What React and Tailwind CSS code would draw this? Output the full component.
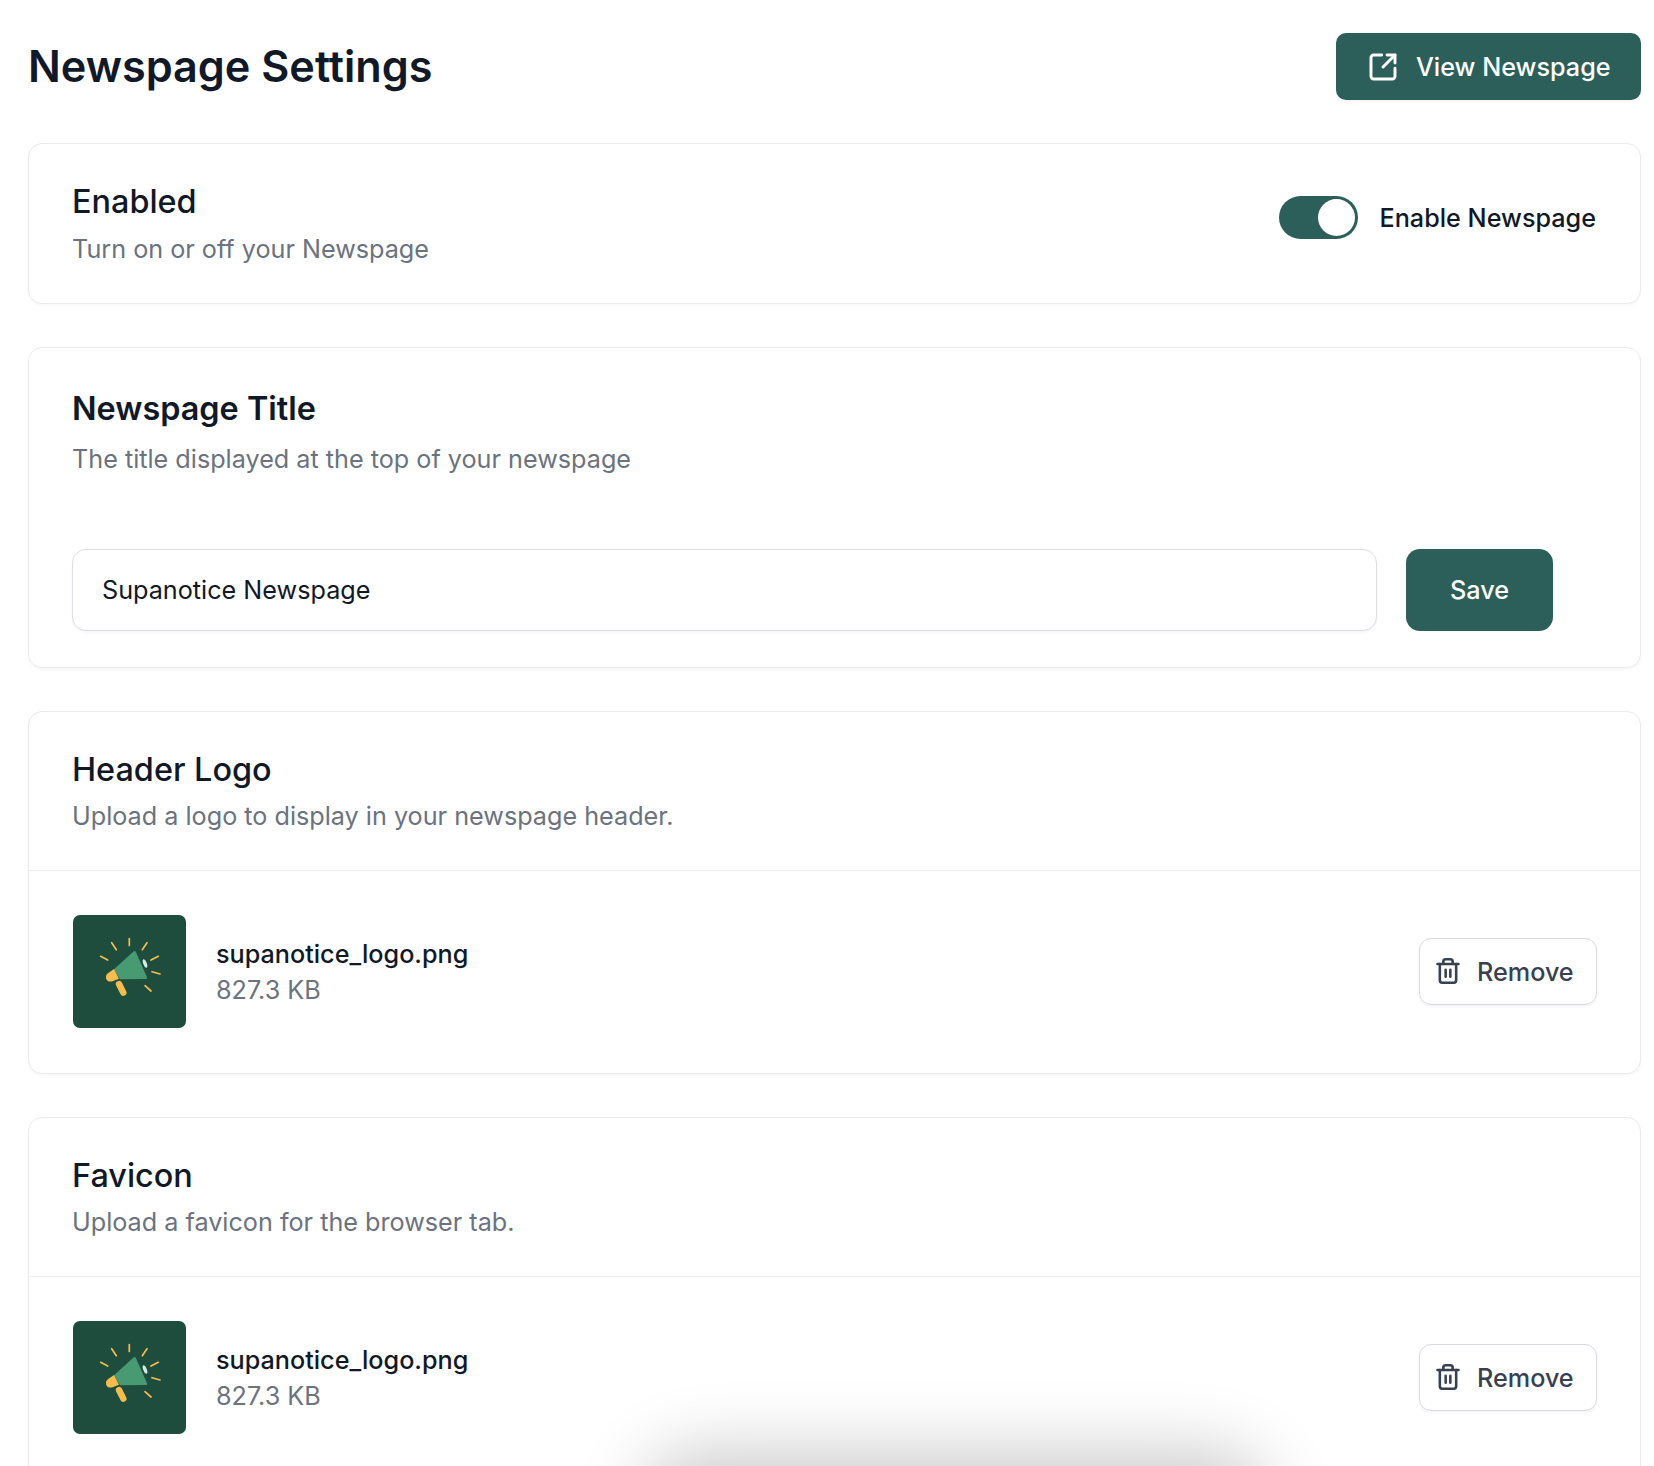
import { SquareArrowOutUpRight, Trash2 } from "lucide-react";

function LogoThumb() {
  return (
    <div className="w-[113px] h-[113px] rounded-[7px] bg-[#1f4d3d] shrink-0">
      <svg viewBox="0 0 113 113" className="w-full h-full">
        <g stroke="#f5bc4f" strokeWidth="1.7" strokeLinecap="round">
          <path d="M56.3 23.5v7" />
          <path d="M38.7 27.7l4.6 7" />
          <path d="M74 27.7l-4.7 7" />
          <path d="M27.7 41.3l7 3.7" />
          <path d="M85.3 41.3l-7.3 3.7" />
          <path d="M79 56.7l8 2.3" />
          <path d="M72 70.7l6 5.3" />
        </g>
        <ellipse cx="72" cy="48.5" rx="1.8" ry="4.4" transform="rotate(-20 72 48.5)" fill="#d3ebe6" />
        <path d="M41 54.3L60.5 36.6q1.6-1.2 2.5 .6l11 25q.6 1.6-1 1.8L47 64.3z" fill="#479a72" />
        <path d="M41 54l5 9.7-6.5 2.6q-3 .8-5-.6-2-1.6-1.5-4.4 .3-2.2 2.5-3.6z" fill="#f5bc4f" />
        <path d="M46 69l4.3 8.7" stroke="#f5bc4f" strokeWidth="6.4" strokeLinecap="round" />
      </svg>
    </div>
  );
}

function CardHead({ title, sub, bold }) {
  return (
    <div>
      <h2 className={"text-[32.4px] leading-[49px] text-[#111827] " + (bold ? "font-semibold mb-[8.6px]" : "font-medium mb-[5.5px]")}>{title}</h2>
      <p className="text-[25.2px] leading-[35px] text-[#6b7280]">{sub}</p>
    </div>
  );
}

function FileCard({ title, sub }) {
  return (
    <div className="mt-[43px] rounded-[14px] border-[1.8px] border-[#eaebef] bg-white shadow-[0_2px_3px_rgba(0,0,0,0.03)]">
      <div className="px-[43px] pt-[33px] pb-[35.5px] border-b-[1.8px] border-[#eceef1]">
        <CardHead title={title} sub={sub} />
      </div>
      <div className="flex items-center justify-between pl-[44px] pr-[43px] pt-[44px] pb-[45px]">
        <div className="flex items-center gap-[30px]">
          <LogoThumb />
          <div className="pt-[2px]">
            <p className="text-[25.2px] leading-[35px] font-medium text-[#111827]">supanotice_logo.png</p>
            <p className="mt-[1px] text-[25.2px] leading-[35px] text-[#6b7280]">827.3 KB</p>
          </div>
        </div>
        <button className="flex items-center gap-[15px] h-[67px] w-[178px] pl-[14px] rounded-[12px] border-[1.8px] border-[#d8dae0] bg-white shadow-[0_2px_3px_rgba(0,0,0,0.04)] text-[25.2px] font-medium text-[#374151]">
          <Trash2 size={28} strokeWidth={2.2} />
          <span className="pt-[4px]">Remove</span>
        </button>
      </div>
    </div>
  );
}

export default function App() {
  return (
    <div className="relative h-[1466px] overflow-hidden bg-white pl-[28px] pr-[13px] pt-[33px] font-['Inter',sans-serif]">
      <div className="flex items-center justify-between">
        <h1 className="text-[43.2px] leading-[67px] font-semibold text-[#111827]">Newspage Settings</h1>
        <button className="flex items-center gap-[17px] h-[67px] w-[305px] pl-[31px] rounded-[10px] bg-[#2d5f5a] text-white text-[25.2px] font-medium shadow-[0_2px_3px_rgba(0,0,0,0.04)]">
          <SquareArrowOutUpRight size={32} strokeWidth={2.2} />
          <span className="pt-[2px]">View Newspage</span>
        </button>
      </div>

      {/* Enabled */}
      <div className="mt-[43px] flex items-start justify-between rounded-[14px] border-[1.8px] border-[#eaebef] bg-white shadow-[0_2px_3px_rgba(0,0,0,0.03)] pl-[43px] pr-[44px] pt-[33px] h-[161px]">
        <CardHead title="Enabled" sub="Turn on or off your Newspage" />
        <div className="mt-[19px] flex items-center gap-[22px]">
          <div className="flex justify-end items-center w-[79px] h-[43px] rounded-full bg-[#2d5f5a] pr-[3px]">
            <span className="block w-[37px] h-[37px] rounded-full bg-white" />
          </div>
          <span className="pt-[3px] text-[25.2px] font-medium text-[#111827]">Enable Newspage</span>
        </div>
      </div>

      {/* Title */}
      <div className="mt-[43px] rounded-[14px] border-[1.8px] border-[#eaebef] bg-white shadow-[0_2px_3px_rgba(0,0,0,0.03)] pl-[43px] pr-[87px] pt-[36px] pb-[36px]">
        <CardHead title="Newspage Title" sub="The title displayed at the top of your newspage" bold />
        <div className="mt-[72px] flex gap-[29px]">
          <div className="flex-1 flex items-center h-[82px] rounded-[14px] border-[1.8px] border-[#dcdee3] bg-white shadow-[0_2px_3px_rgba(0,0,0,0.04)] pl-[29px] pt-[2px] text-[25.2px] text-[#111827]">
            Supanotice Newspage
          </div>
          <button className="w-[147px] h-[82px] rounded-[14px] bg-[#2d5f5a] pt-[2px] text-white text-[25.2px] font-medium">Save</button>
        </div>
      </div>

      <FileCard title="Header Logo" sub="Upload a logo to display in your newspage header." />
      <FileCard title="Favicon" sub="Upload a favicon for the browser tab." />

      {/* floating element sitting just under the fold */}
      <div className="absolute left-[670px] top-[1480px] w-[570px] h-[60px] rounded-full shadow-[0_0_70px_30px_rgba(0,0,0,0.2)]" />
    </div>
  );
}
